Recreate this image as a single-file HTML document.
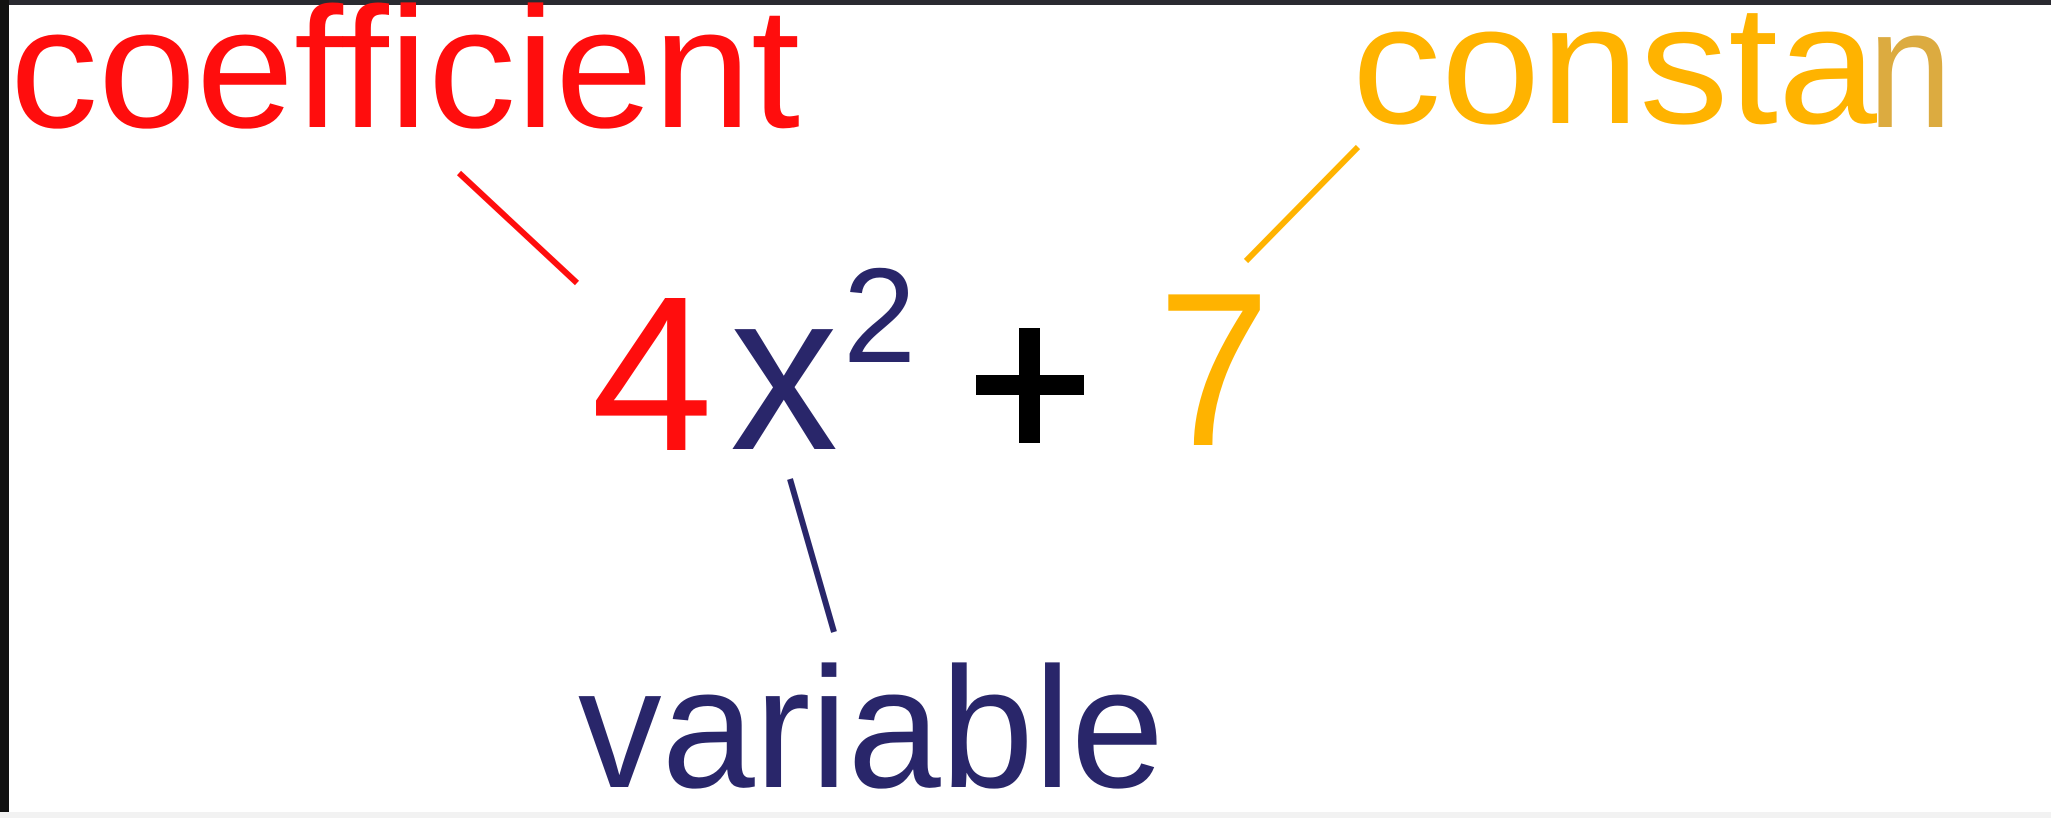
<!DOCTYPE html>
<html><head><meta charset="utf-8"><style>
html,body{margin:0;padding:0;background:#fff;overflow:hidden}
svg{display:block}
</style></head><body>
<svg width="2051" height="818" viewBox="0 0 2051 818" xmlns="http://www.w3.org/2000/svg">
<rect x="0" y="0" width="2051" height="818" fill="#fff"/>
<rect x="0" y="0" width="2051" height="5" fill="#2a2a30"/>
<rect x="0" y="0" width="9" height="818" fill="#111"/>
<rect x="0" y="812" width="2051" height="6" fill="#f2f2f2"/>
<g font-family="Liberation Sans, sans-serif">
<text x="10" y="127" font-size="172" fill="#ff0d0d" textLength="790" lengthAdjust="spacingAndGlyphs">coefficient</text>
<text x="1352" y="123" font-size="170" fill="#ffb300" textLength="525" lengthAdjust="spacingAndGlyphs">consta</text>
<text x="1868" y="127" font-size="170" fill="#dcab40" textLength="84" lengthAdjust="spacingAndGlyphs">n</text>
<text x="578" y="787" font-size="172" fill="#29266a" textLength="586" lengthAdjust="spacingAndGlyphs">variable</text>
<text x="591" y="450" font-size="221" fill="#ff0d0d" textLength="122" lengthAdjust="spacingAndGlyphs">4</text>
<text x="730" y="449" font-size="227" fill="#29266a" textLength="108" lengthAdjust="spacingAndGlyphs">x</text>
<text x="843" y="362" font-size="135" fill="#29266a" textLength="73" lengthAdjust="spacingAndGlyphs">2</text>
<text x="1158" y="445" font-size="219" fill="#ffb300" textLength="112" lengthAdjust="spacingAndGlyphs">7</text>
</g>
<rect x="1019" y="328" width="21" height="115" fill="#000"/>
<rect x="976" y="375" width="108" height="20" fill="#000"/>
<line x1="459" y1="173" x2="577" y2="283" stroke="#ff0d0d" stroke-width="6"/>
<line x1="1358" y1="147" x2="1246" y2="261" stroke="#ffb300" stroke-width="6"/>
<line x1="790" y1="479" x2="834" y2="632" stroke="#29266a" stroke-width="6"/>
</svg>
</body></html>
